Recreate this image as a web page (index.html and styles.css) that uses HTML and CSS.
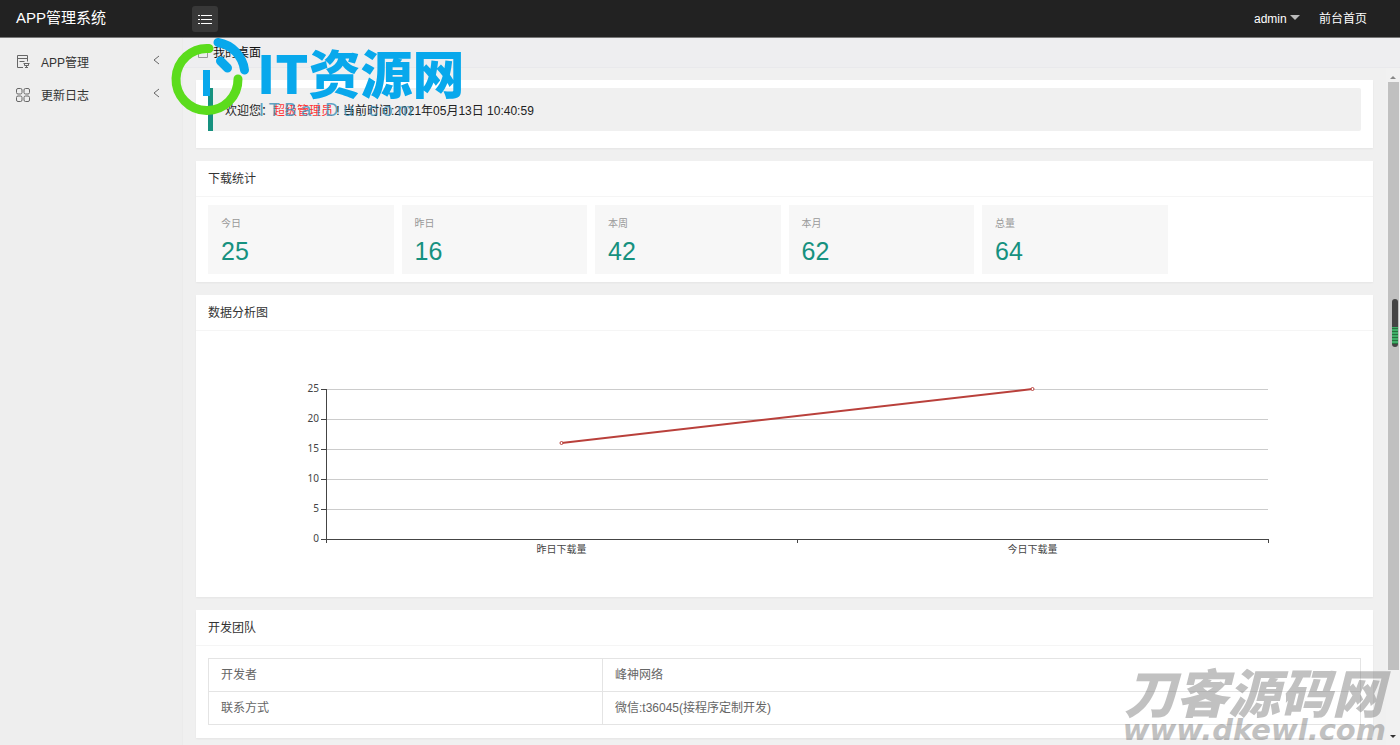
FILE: index.html
```html
<!DOCTYPE html>
<html lang="zh-CN">
<head>
<meta charset="utf-8">
<title>APP管理系统</title>
<link rel="stylesheet" href="styles.css">
</head>
<body>
<header class="topbar">
  <div class="brand">APP管理系统</div>
  <button class="menu-toggle" type="button" aria-label="菜单">
    <svg width="14" height="10" viewBox="0 0 14 10" stroke="#fff" stroke-width="1"><path d="M0 1.500h2M3 1.500h11M0 5.500h2M3 5.500h11M0 9.500h2M3 9.500h11"/></svg>
  </button>
  <nav class="user-nav">
    <a href="#">admin <i class="caret"></i></a>
    <a href="#">前台首页</a>
  </nav>
</header>
<div class="shell">
  <nav class="sidebar">
    <a href="#">
      <svg width="14" height="14" viewBox="0 0 14 14" fill="none" stroke="#666"><path d="M7 12.500H1.500V.5h10v6M1.500 3.500h10M3.500 6.500h5M7.500 8.500h6M8.500 8.500v2h4v-2M10.500 10.500v2M9 12.500h3"/></svg>
      <span>APP管理</span>
      <svg class="chev" width="7" height="10" viewBox="0 0 7 10" fill="none" stroke="#666"><path d="M6 1 1 5l5 4"/></svg>
    </a>
    <a href="#">
      <svg width="14" height="14" viewBox="0 0 14 14" fill="none" stroke="#666"><rect x=".5" y=".5" width="5.500" height="5.500" rx="1.500"/><rect x="8" y=".5" width="5.500" height="5.500" rx="1.500"/><rect x=".5" y="8" width="5.500" height="5.500" rx="1.500"/><rect x="8" y="8" width="5.500" height="5.500" rx="1.500"/></svg>
      <span>更新日志</span>
      <svg class="chev" width="7" height="10" viewBox="0 0 7 10" fill="none" stroke="#666"><path d="M6 1 1 5l5 4"/></svg>
    </a>
  </nav>
  <div class="main">
    <div class="tabs">
      <svg width="12" height="12" viewBox="0 0 12 12" fill="none" stroke="#999"><path d="M1.500 4.500 6 1l4.500 3.500v6h-9z"/></svg>
      <span>我的桌面</span>
    </div>
    <div class="page">
      <main class="content">
        <section class="card welcome">
          <blockquote>欢迎您：<span class="role">超级管理员</span> ! 当前时间:2021年05月13日 10:40:59</blockquote>
        </section>
        <section class="card">
          <h2>下载统计</h2>
          <div class="stats">
            <div class="stat"><h3>今日</h3><p>25</p></div>
            <div class="stat"><h3>昨日</h3><p>16</p></div>
            <div class="stat"><h3>本周</h3><p>42</p></div>
            <div class="stat"><h3>本月</h3><p>62</p></div>
            <div class="stat"><h3>总量</h3><p>64</p></div>
          </div>
        </section>
        <section class="card">
          <h2>数据分析图</h2>
          <div class="chart">
            <svg class="plot" role="img" aria-label="下载量折线图">
              <g class="grid-lines">
                <line x1="0" x2="100%" y1="0" y2="0"/>
                <line x1="0" x2="100%" y1="30" y2="30"/>
                <line x1="0" x2="100%" y1="60" y2="60"/>
                <line x1="0" x2="100%" y1="90" y2="90"/>
                <line x1="0" x2="100%" y1="120" y2="120"/>
              </g>
              <g class="axis">
                <line x1="0" x2="0" y1="0" y2="154"/>
                <line x1="-5" x2="100%" y1="150" y2="150"/>
                <line x1="-5" x2="0" y1="0" y2="0"/>
                <line x1="-5" x2="0" y1="30" y2="30"/>
                <line x1="-5" x2="0" y1="60" y2="60"/>
                <line x1="-5" x2="0" y1="90" y2="90"/>
                <line x1="-5" x2="0" y1="120" y2="120"/>
                <line x1="50%" x2="50%" y1="150" y2="154"/>
                <line x1="100%" x2="100%" y1="150" y2="154"/>
              </g>
              <g class="labels-y">
                <text x="-7" y="3">25</text><text x="-7" y="33">20</text><text x="-7" y="63">15</text>
                <text x="-7" y="93">10</text><text x="-7" y="123">5</text><text x="-7" y="153">0</text>
              </g>
              <g class="labels-x"><text x="25%" y="164">昨日下载量</text><text x="75%" y="164">今日下载量</text></g>
              <g class="series">
                <line x1="25%" y1="54" x2="75%" y2="0"/>
                <circle cx="25%" cy="54" r="1.500"/><circle cx="75%" cy="0" r="1.500"/>
              </g>
            </svg>
          </div>
        </section>
        <section class="card">
          <h2>开发团队</h2>
          <div class="team">
            <table>
              <tr><th scope="row">开发者</th><td>峰神网络</td></tr>
              <tr><th scope="row">联系方式</th><td>微信:t36045(接程序定制开发)</td></tr>
            </table>
          </div>
        </section>
      </main>
      <div class="scrollbar">
        <i class="arrow up"></i>
        <div class="thumb"></div>
        <i class="arrow down"></i>
      </div>
    </div>
  </div>
</div>
<div class="meter"></div>
<div class="mark-top">
  <svg width="80" height="80" viewBox="170 36 80 80" fill="none" stroke-width="9" stroke-linecap="round">
    <path stroke="#5bdc1c" d="M209 48.500A31 31 0 1 0 238 79"/>
    <path stroke="#08a8ec" d="M218 42.500A32 32 0 0 1 244.500 70M220.500 61l7 7"/>
    <path fill="#08a8ec" d="M203 70h7v26h-7z"/>
  </svg>
  <div class="mark-title">IT资源网</div>
  <div class="mark-sub">I T B a i D u . c o m</div>
</div>
<div class="mark-bottom">
  <div class="mark-name">刀客源码网</div>
  <div class="mark-url">www.dkewl.com</div>
</div>
</body>
</html>
```
FILE: styles.css
```css
* { box-sizing: border-box; }
body {
  margin: 0;
  min-height: 100vh;
  display: flex;
  flex-direction: column;
  position: relative;
  overflow: hidden;
  background: #f0f0f0;
  color: #333;
  font: 12px/18px "Liberation Sans", "Noto Sans CJK SC", sans-serif;
}
a { color: inherit; text-decoration: none; }
h2, h3, p, blockquote { margin: 0; font-weight: 400; }
svg { display: block; }

.topbar {
  display: flex;
  align-items: center;
  height: 38px;
  background: #222;
  border-bottom: 1px solid #777;
  color: #fff;
}
.brand { width: 192px; padding: 0 0 2px 16px; font-size: 15px; }
.menu-toggle {
  display: grid;
  place-items: center;
  width: 26px;
  height: 26px;
  padding: 0;
  border: 0;
  border-radius: 3px;
  background: #383838;
}
.user-nav { display: flex; gap: 19px; margin-left: auto; padding-right: 33px; }
.caret {
  display: inline-block;
  vertical-align: 3px;
  border: 5px solid transparent;
  border-top-color: #bbb;
  border-bottom: 0;
}

.shell { display: flex; flex: 1; }
.sidebar {
  width: 183px;
  padding-top: 8px;
  background: #eee;
  border-right: 1px solid #ebebeb;
}
.sidebar a { display: flex; align-items: center; height: 33px; padding: 0 22px 2px 16px; }
.sidebar span { margin-left: 11px; padding-top: 2px; }
.chev { margin: 0 0 3px auto; }
.main { flex: 1; min-width: 0; display: flex; flex-direction: column; }
.tabs {
  display: flex;
  align-items: center;
  gap: 4px;
  height: 30px;
  padding-left: 14px;
  background: #eeeef0;
  border-bottom: 1px solid #e9e9ec;
  color: #111;
}
.page { flex: 1; display: flex; }
.content {
  flex: 1;
  display: flex;
  flex-direction: column;
  gap: 13px;
  padding: 12px 13px 8px;
}
.card { background: #fff; box-shadow: 0 1px 2px #0000000d; }
.card h2 {
  height: 36px;
  padding-left: 12px;
  border-bottom: 1px solid #f5f5f5;
  font-size: 12px;
  line-height: 37px;
}
.welcome { padding: 8px 12px 17px; }
blockquote {
  padding: 14px 12px 11px;
  border-left: 5px solid #16917f;
  border-radius: 0 2px 2px 0;
  background: #f0f0f0;
  color: #222;
}
.role { color: #f33; }
.stats {
  display: grid;
  grid-template-columns: repeat(6, 1fr);
  gap: 8px;
  padding: 8px 12px;
}
.stat { padding: 9px 13px 6px; background: #f7f7f7; }
.stat h3 { color: #999; font-size: 10px; line-height: 20px; }
.stat p { color: #16917f; font-size: 25px; line-height: 34px; }

.chart { padding: 58px 105px 58px 130px; }
.plot {
  width: 100%;
  height: 150px;
  overflow: visible;
  font: 10px "Noto Sans", "Noto Sans CJK SC", sans-serif;
  fill: #444;
}
.grid-lines { stroke: #ccc; shape-rendering: crispEdges; }
.axis { stroke: #444; shape-rendering: crispEdges; }
.labels-y { text-anchor: end; }
.labels-x { text-anchor: middle; }
.series { stroke: #b9403b; stroke-width: 2; }
.series circle { fill: #fff; stroke-width: 1; }

.team { padding: 12px 12px 13px; }
table { width: 100%; border-collapse: collapse; color: #666; }
th, td { height: 33px; padding: 0 12px; border: 1px solid #e4e4e4; font-weight: 400; text-align: left; }
th { width: 34.2%; }

.scrollbar {
  display: flex;
  flex-direction: column;
  align-items: center;
  width: 14px;
  padding: 5px 0;
  background: #f1f1f1;
}
.arrow { border: 3px solid transparent; }
.up { border-bottom-color: #888; }
.down { border-top-color: #333; }
.thumb { width: 11px; flex: 0 1 588px; margin: 3px 0 auto; background: #c0c0c0; }
.meter {
  position: absolute;
  top: 299px;
  right: 2px;
  width: 6px;
  height: 48px;
  border-radius: 3px;
  background: linear-gradient(#444 0 58%, transparent 58% 94%, #444 94%), repeating-linear-gradient(#3fae68 0 2px, #28713f 2px 3px);
}

.mark-top { position: absolute; top: 36px; left: 170px; color: #08a8ec; pointer-events: none; }
.mark-title {
  position: absolute;
  top: 6px;
  left: 87px;
  white-space: nowrap;
  font: 900 52px/60px "Noto Sans CJK SC", sans-serif;
}
.mark-sub {
  position: absolute;
  top: 64px;
  left: 89px;
  white-space: nowrap;
  font-size: 18px;
  line-height: 20px;
  color: #3a8fb8;
  opacity: .8;
}
.mark-bottom {
  position: absolute;
  right: 14px;
  bottom: 4px;
  color: #777;
  opacity: .45;
  text-align: right;
  white-space: nowrap;
  pointer-events: none;
}
.mark-name { padding-right: 2px; font: italic 900 52px/54px "Noto Sans CJK SC", sans-serif; }
.mark-url { font: italic 700 29px/24px "DejaVu Sans", sans-serif; }
```
